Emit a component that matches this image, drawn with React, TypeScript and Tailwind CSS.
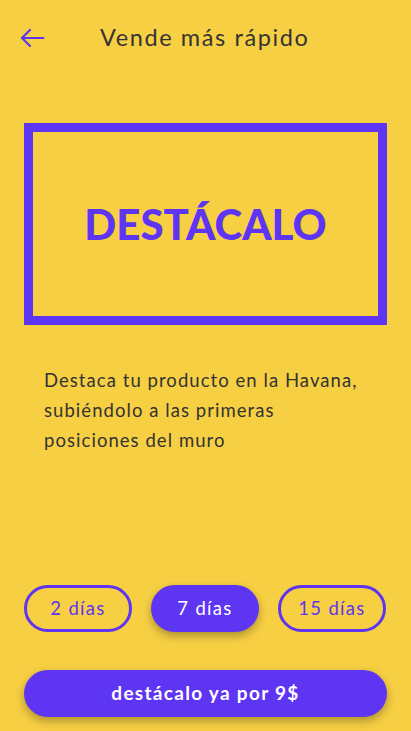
import React from "react";

export default function App() {
  return (
    <div
      className="w-[411px] h-[731px] bg-[#F7CF43] flex flex-col text-[#333333]"
      style={{ fontFamily: "Lato, 'Open Sans', sans-serif" }}
    >
      <div className="h-[76px] flex items-center px-[20px]">
        <svg width="25" height="20" viewBox="0 0 25 20" fill="none" stroke="#5E35F2" strokeWidth="2.2" strokeLinecap="round" strokeLinejoin="round">
          <path d="M23.5 10H2" />
          <path d="M10 2L2 10L10 18" />
        </svg>
        <div className="ml-[55px] text-[23.5px] tracking-[1.6px] leading-none">Vende más rápido</div>
      </div>
      <div className="mx-[24px] mt-[47px] h-[202px] border-[9px] border-[#5E35F2] flex items-center justify-center">
        <span className="text-[#5E35F2] text-[42px] font-black leading-none">DESTÁCALO</span>
      </div>
      <p className="mx-[44px] mt-[40px] text-[18.5px] tracking-[1.05px] leading-[30px]">
        Destaca tu producto en la Havana,<br />subiéndolo a las primeras<br />posiciones del muro
      </p>
      <div className="flex-1" />
      <div className="flex gap-[19px] px-[24px]">
        <button className="w-[108px] h-[47px] rounded-full border-[3px] border-[#5E35F2] text-[#5E35F2] text-[18.5px] tracking-[1.3px]">2 días</button>
        <button className="w-[108px] h-[47px] rounded-full bg-[#5E35F2] text-white text-[18.5px] tracking-[1.3px] shadow-[0_4px_8px_rgba(0,0,0,0.3)]">7 días</button>
        <button className="w-[108px] h-[47px] rounded-full border-[3px] border-[#5E35F2] text-[#5E35F2] text-[18.5px] tracking-[1.3px]">15 días</button>
      </div>
      <button className="mx-[24px] mt-[38px] mb-[14px] h-[47px] rounded-full bg-[#5E35F2] text-white text-[19px] tracking-[1.3px] font-bold shadow-[0_4px_10px_rgba(0,0,0,0.3)]">
        destácalo ya por 9$
      </button>
    </div>
  );
}
